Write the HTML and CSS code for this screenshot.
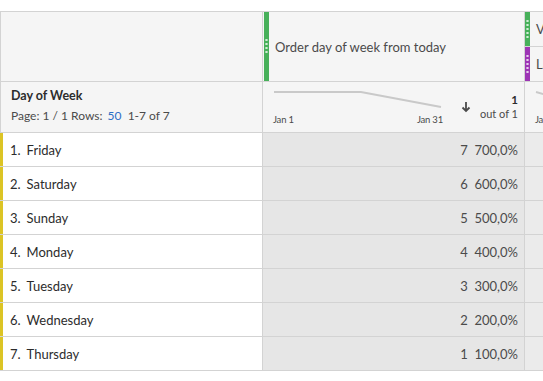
FILE: index.html
```html
<!DOCTYPE html>
<html lang="en">
<head>
    <meta charset="UTF-8">
    <title>Freeform table</title>
    <link rel="stylesheet" href="styles.css">
</head>
<body>
    <div class="freeform">
        <div class="head-row">
            <div class="cell corner"></div>
            <div class="cell metric">
                <span class="grip green"></span>
                <span class="metric-title">Order day of week from today</span>
            </div>
            <div class="cell stack">
                <div class="stack-item">
                    <span class="grip green"></span>
                    <span class="metric-title">Visits</span>
                </div>
                <div class="stack-item">
                    <span class="grip purple"></span>
                    <span class="metric-title">Last touch</span>
                </div>
            </div>
        </div>
        <div class="sub-row">
            <div class="cell dim-info">
                <div class="dim-name">Day of Week</div>
                <div class="pager">Page: 1 / 1 Rows: <span class="rows-link">50</span> &nbsp;1-7 of 7</div>
            </div>
            <div class="cell summary">
                <div class="spark">
                    <svg width="170" height="20" viewBox="0 0 170 20">
                        <polyline points="1,2 88,2 168,17" fill="none" stroke="#c9c9c9" stroke-width="2"/>
                    </svg>
                    <div class="spark-dates"><span>Jan 1</span><span>Jan 31</span></div>
                </div>
                <span class="sort-arrow">
                    <svg width="10" height="12" viewBox="0 0 10 12">
                        <path d="M5 1 V10 M1.5 6.5 L5 10 L8.5 6.5" fill="none" stroke="#4b4b4b" stroke-width="1.8"/>
                    </svg>
                </span>
                <div class="total">
                    <div class="total-num">1</div>
                    <div class="total-of">out of 1</div>
                </div>
            </div>
            <div class="cell summary next">
                <div class="spark">
                    <svg width="40" height="20" viewBox="0 0 40 20">
                        <polyline points="1,2 30,10" fill="none" stroke="#c9c9c9" stroke-width="2"/>
                    </svg>
                    <div class="spark-dates"><span>Jan 1</span></div>
                </div>
            </div>
        </div>
        <div class="body-row">
            <div class="cell label"><span class="idx">1.</span>Friday</div>
            <div class="cell value">7&nbsp; 700,0%</div>
            <div class="cell value extra"></div>
        </div>
        <div class="body-row">
            <div class="cell label"><span class="idx">2.</span>Saturday</div>
            <div class="cell value">6&nbsp; 600,0%</div>
            <div class="cell value extra"></div>
        </div>
        <div class="body-row">
            <div class="cell label"><span class="idx">3.</span>Sunday</div>
            <div class="cell value">5&nbsp; 500,0%</div>
            <div class="cell value extra"></div>
        </div>
        <div class="body-row">
            <div class="cell label"><span class="idx">4.</span>Monday</div>
            <div class="cell value">4&nbsp; 400,0%</div>
            <div class="cell value extra"></div>
        </div>
        <div class="body-row">
            <div class="cell label"><span class="idx">5.</span>Tuesday</div>
            <div class="cell value">3&nbsp; 300,0%</div>
            <div class="cell value extra"></div>
        </div>
        <div class="body-row">
            <div class="cell label"><span class="idx">6.</span>Wednesday</div>
            <div class="cell value">2&nbsp; 200,0%</div>
            <div class="cell value extra"></div>
        </div>
        <div class="body-row">
            <div class="cell label"><span class="idx">7.</span>Thursday</div>
            <div class="cell value">1&nbsp; 100,0%</div>
            <div class="cell value extra"></div>
        </div>
    </div>
</body>
</html>
```

FILE: styles.css
```css
html, body {
    margin: 0;
    padding: 0;
    background: #ffffff;
    overflow: hidden;
}
body {
    font-family: Lato, "Open Sans", sans-serif;
    color: #2c2c2c;
}
.freeform {
    margin-top: 11px;
    width: 720px;
    border-top: 1px solid #d3d3d3;
    border-left: 1px solid #d3d3d3;
}
.head-row, .sub-row, .body-row {
    display: grid;
    grid-template-columns: 262px 262px 196px;
    border-bottom: 1px solid #d3d3d3;
}
.cell {
    border-right: 1px solid #d3d3d3;
    box-sizing: border-box;
}
.head-row {
    height: 69px;
    background: #f5f5f5;
}
.metric {
    display: flex;
    align-items: center;
    gap: 6px;
    padding-left: 1px;
}
.grip {
    align-self: stretch;
    width: 5px;
    flex-shrink: 0;
    background-repeat: no-repeat;
}
.grip.green {
    background-color: #47b05a;
}
.grip.purple {
    background-color: #9d35b5;
}
.metric .grip {
    background-image:
        radial-gradient(circle, rgba(255,255,255,0.75) 1px, transparent 1.3px),
        radial-gradient(circle, rgba(255,255,255,0.75) 1px, transparent 1.3px),
        radial-gradient(circle, rgba(255,255,255,0.75) 1px, transparent 1.3px),
        radial-gradient(circle, rgba(255,255,255,0.75) 1px, transparent 1.3px);
    background-size: 5px 4px;
    background-position: 0 26px, 0 30px, 0 34px, 0 38px;
}
.metric-title {
    font-size: 13px;
    color: #4b4b4b;
}
.stack {
    display: flex;
    flex-direction: column;
}
.stack-item {
    flex: 1;
    display: flex;
    align-items: center;
    gap: 6px;
}
.stack-item + .stack-item {
    border-top: 1px solid #d3d3d3;
}
.stack-item .grip {
    background-image:
        radial-gradient(circle, rgba(255,255,255,0.75) 1px, transparent 1.3px),
        radial-gradient(circle, rgba(255,255,255,0.75) 1px, transparent 1.3px),
        radial-gradient(circle, rgba(255,255,255,0.75) 1px, transparent 1.3px),
        radial-gradient(circle, rgba(255,255,255,0.75) 1px, transparent 1.3px),
        radial-gradient(circle, rgba(255,255,255,0.75) 1px, transparent 1.3px);
    background-size: 5px 4px;
    background-position: 0 7px, 0 11px, 0 15px, 0 19px, 0 23px;
}
.sub-row {
    height: 50px;
    background: #f5f5f5;
}
.dim-info {
    padding: 6px 0 0 10px;
}
.dim-name {
    font-size: 12.5px;
    font-weight: bold;
    color: #2c2c2c;
    line-height: 16px;
}
.pager {
    font-size: 12px;
    color: #4b4b4b;
    margin-top: 5px;
    line-height: 14px;
}
.rows-link {
    color: #2d6fc6;
    margin-left: 2px;
}
.summary {
    display: flex;
    align-items: flex-start;
    padding: 8px 6px 0 10px;
}
.spark {
    width: 170px;
    display: flex;
    flex-direction: column;
}
.spark svg {
    display: block;
}
.spark-dates {
    display: flex;
    justify-content: space-between;
    font-size: 9.5px;
    color: #4b4b4b;
    margin-top: 4px;
    letter-spacing: -0.2px;
}
.sort-arrow {
    margin: 7px 0 0 18px;
}
.total {
    margin-left: auto;
    text-align: right;
    padding-top: 3px;
}
.total-num {
    font-size: 11.5px;
    font-weight: bold;
    line-height: 13px;
}
.total-of {
    font-size: 11px;
    color: #4b4b4b;
    line-height: 15px;
}
.next .spark {
    width: 40px;
}
.body-row {
    height: 34px;
    box-sizing: border-box;
}
.label {
    background: #ffffff;
    border-left: 3px solid #dcc425;
    margin-left: -1px;
    display: flex;
    align-items: center;
    padding-left: 7px;
    font-size: 13px;
    color: #2c2c2c;
}
.idx {
    margin-right: 6px;
}
.value {
    background: #e6e6e6;
    display: flex;
    align-items: center;
    justify-content: flex-end;
    padding-right: 6px;
    font-size: 13px;
    color: #4b4b4b;
}
.extra {
    background: #ebebeb;
}
```
